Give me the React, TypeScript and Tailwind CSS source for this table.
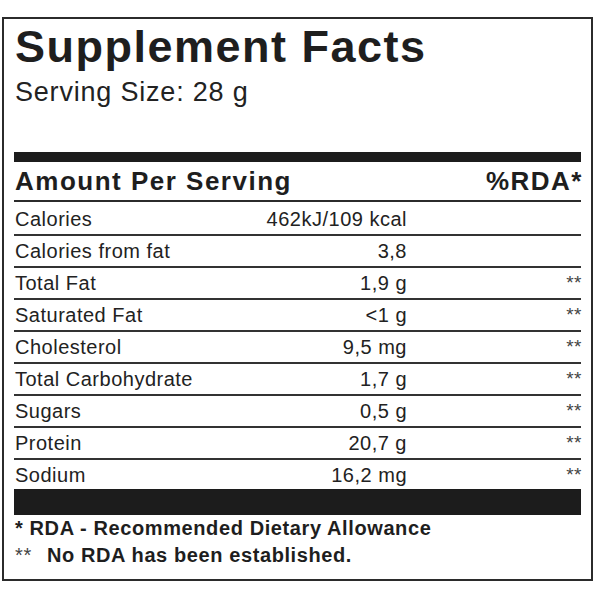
import React from "react";

const rows: { name: string; value: string; rda: string }[] = [
  { name: "Calories", value: "462kJ/109 kcal", rda: "" },
  { name: "Calories from fat", value: "3,8", rda: "" },
  { name: "Total Fat", value: "1,9 g", rda: "**" },
  { name: "Saturated Fat", value: "<1 g", rda: "**" },
  { name: "Cholesterol", value: "9,5 mg", rda: "**" },
  { name: "Total Carbohydrate", value: "1,7 g", rda: "**" },
  { name: "Sugars", value: "0,5 g", rda: "**" },
  { name: "Protein", value: "20,7 g", rda: "**" },
  { name: "Sodium", value: "16,2 mg", rda: "**" },
];

export default function App() {
  return (
    <div
      className="w-[597px] h-[597px] bg-white pt-[17px] pl-[2px] text-[#222]"
      style={{ fontFamily: '"Liberation Sans", Arial, sans-serif' }}
    >
      <div className="w-[591px] h-[564px] border-2 border-[#2b2b2b] px-[10px] flex flex-col">
        <h1 className="mt-[5px] pl-[1px] text-[45px] leading-none font-bold tracking-[1.5px] text-[#1e1e1e]">
          Supplement Facts
        </h1>
        <div className="mt-[10px] pl-[1px] text-[27px] leading-none tracking-[0.8px]">
          Serving Size: 28 g
        </div>
        <div className="mt-[46px] h-[10px] bg-[#1c1c1c]" />
        <div className="h-[40px] flex items-center justify-between border-b-2 border-[#2b2b2b] text-[26px] font-bold tracking-[1.5px] text-[#1e1e1e]">
          <span className="pl-[1px]">Amount Per Serving</span>
          <span className="-mr-[2px]">%RDA*</span>
        </div>
        {rows.map((r, i) => {
          const last = i === rows.length - 1;
          const h = i === 0 ? "h-[34px] pt-[2px]" : last ? "h-[29px]" : "h-[32px]";
          return (
            <div
              key={r.name}
              className={`flex items-center text-[20px] tracking-[0.5px] ${h} ${
                last ? "" : "border-b-2 border-[#333]"
              }`}
            >
              <div className="w-[393px] flex justify-between">
                <span className="pl-[1px]">{r.name}</span>
                <span>{r.value}</span>
              </div>
              <div className="flex-1 self-start pt-[5px] text-right text-[19px] leading-none text-[#444] -mr-[1px]">
                {r.rda}
              </div>
            </div>
          );
        })}
        <div className="h-[26px] bg-[#1c1c1c]" />
        <div className="pl-[1px] text-[20px] leading-[27px] font-bold tracking-[0.6px] text-[#1e1e1e]">
          <div>* RDA - Recommended Dietary Allowance</div>
          <div className="flex">
            <span className="w-[32px] font-normal text-[#444]">**</span>
            <span>No RDA has been established.</span>
          </div>
        </div>
      </div>
    </div>
  );
}
